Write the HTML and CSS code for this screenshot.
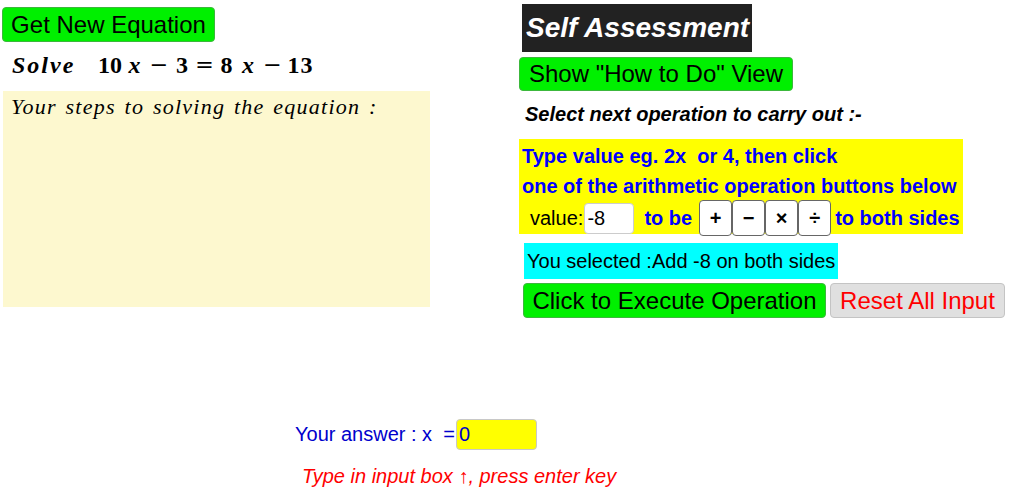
FILE: index.html
```html
<!DOCTYPE html>
<html>
<head>
<meta charset="utf-8">
<link rel="stylesheet" href="styles.css">
</head>
<body>
<div class="applet">
  <div class="top">
    <div class="left">
      <button class="btn green new-eq">Get New Equation</button>
      <div class="solve">
        <span class="solve-word">Solve</span>
        <span class="eq">
          <span class="t w24">10</span><span class="t w25 v">x</span><span class="t w24 op-sym">−</span><span class="t w22">3</span><span class="t w23 op-sym">=</span><span class="t w21">8</span><span class="t w22 v">x</span><span class="t w27 op-sym">−</span><span class="t w29">13</span>
        </span>
      </div>
      <div class="steps"><span class="steps-text">Your steps to solving the equation :</span></div>
    </div>
    <div class="right">
      <div class="title">Self Assessment</div>
      <button class="btn green show-view">Show "How to Do" View</button>
      <div class="select">Select next operation to carry out :-</div>
      <div class="ops">
        <div class="ops-line">Type value eg. 2x&nbsp; or 4, then click</div>
        <div class="ops-line">one of the arithmetic operation buttons below</div>
        <div class="ops-row">
          <span class="value-label">value:</span>
          <span class="value-input">-8</span>
          <span class="to-be">to be</span>
          <span class="op-group">
            <span class="op">+</span><span class="op">−</span><span class="op">×</span><span class="op">÷</span>
          </span>
          <span class="both">to both sides</span>
        </div>
      </div>
      <div class="selected">You selected :Add -8 on both sides</div>
      <div class="actions">
        <button class="btn green execute">Click to Execute Operation</button>
        <button class="btn grey reset">Reset All Input</button>
      </div>
    </div>
  </div>
  <div class="answer">
    <div class="answer-row">
      <span class="answer-label">Your answer : x&nbsp; =</span>
      <span class="answer-input">0</span>
    </div>
    <div class="hint">Type in input box ↑, press enter key</div>
  </div>
</div>
</body>
</html>
```

FILE: styles.css
```css
* { box-sizing: border-box; }
html, body { margin: 0; padding: 0; background: #fff; }
body { width: 1012px; height: 499px; overflow: hidden; font-family: "Liberation Sans", Arial, sans-serif; }

.applet { display: flex; flex-direction: column; }
.top { display: flex; }
.left { width: 519px; display: flex; flex-direction: column; align-items: flex-start; }
.right { display: flex; flex-direction: column; align-items: flex-start; }

.btn {
  font-family: "Liberation Sans", Arial, sans-serif;
  border-radius: 4px;
  padding: 0;
  margin: 0;
  display: flex;
  align-items: center;
  justify-content: center;
  color: #000;
}
.green { background: #00f000; border: 1px solid #3cb83c; }
.grey { background: #e0e0e0; border: 1px solid #c4c4c4; color: #ff0000; }

.new-eq { margin: 7px 0 0 2px; width: 213px; height: 35px; font-size: 24px; }

.solve {
  margin: 10px 0 0 12px;
  height: 28px;
  display: flex;
  align-items: baseline;
  font-family: "Liberation Serif", "Times New Roman", serif;
  font-weight: bold;
  font-size: 24px;
  line-height: 27px;
}
.solve-word { font-style: italic; width: 86px; letter-spacing: 2px; }
.eq { display: flex; align-items: baseline; }
.t { display: inline-block; text-align: center; }
.v { font-style: italic; }
.op-sym { transform: scaleX(1.25); }
.w21 { width: 21px; }
.w22 { width: 22px; }
.w23 { width: 23px; }
.w24 { width: 24px; }
.w25 { width: 25px; }
.w27 { width: 27px; }
.w29 { width: 29px; letter-spacing: 1px; }

.steps {
  margin: 11px 0 0 3px;
  width: 427px;
  height: 216px;
  background: #fdf8cf;
  padding: 3px 0 0 8px;
}
.steps-text {
  font-family: "Liberation Serif", "Times New Roman", serif;
  font-style: italic;
  font-size: 22px;
  letter-spacing: 1.25px;
  word-spacing: 2px;
}

.title {
  margin: 4px 0 0 3px;
  width: 230px;
  height: 48px;
  background: #222;
  color: #fff;
  font-weight: bold;
  font-style: italic;
  font-size: 28px;
  display: flex;
  align-items: center;
  padding-left: 4px;
}
.show-view { margin-top: 5px; width: 274px; height: 34px; font-size: 24px; }

.select {
  margin: 11px 0 0 6px;
  font-weight: bold;
  font-style: italic;
  font-size: 20px;
  line-height: 24px;
}

.ops {
  margin-top: 13px;
  width: 444px;
  height: 95px;
  background: #ffff00;
  color: #0000ff;
  font-weight: bold;
  font-size: 20px;
  padding: 3px 0 0 3px;
}
.ops-line { line-height: 29px; height: 29px; }
.ops-line + .ops-line { margin-top: 1px; }
.ops-row { display: flex; align-items: center; height: 36px; margin-top: -1px; }
.value-label { font-weight: normal; color: #000; font-size: 20px; margin-left: 8px; }
.value-input {
  width: 50px;
  height: 31px;
  background: #fff;
  border: 1px solid #ccc;
  border-radius: 4px;
  color: #000;
  font-weight: normal;
  font-size: 20px;
  display: flex;
  align-items: center;
  padding-left: 2px;
  margin-left: 1px;
}
.to-be { margin-left: 10px; }
.op-group { display: flex; margin-left: 7px; }
.op {
  width: 33px;
  height: 36px;
  background: #fff;
  border: 1px solid #666;
  border-radius: 4px;
  color: #000;
  font-size: 20px;
  display: flex;
  align-items: center;
  justify-content: center;
}
.both { margin-left: 4px; }

.selected {
  margin: 9px 0 0 5px;
  width: 314px;
  height: 36px;
  background: #00ffff;
  font-size: 20px;
  display: flex;
  align-items: center;
  padding-left: 3px;
}

.actions { display: flex; margin: 4px 0 0 4px; gap: 4px; }
.execute { width: 303px; height: 35px; font-size: 24px; }
.reset { width: 175px; height: 35px; font-size: 24px; color: #ff0000; }

.answer { margin-top: 101px; display: flex; flex-direction: column; align-items: flex-start; padding-left: 295px; }
.answer-row { display: flex; align-items: center; color: #0000cc; font-size: 20px; }
.answer-input {
  width: 81px;
  height: 31px;
  background: #ffff00;
  border: 1px solid #c8c8c8;
  border-radius: 4px;
  display: flex;
  align-items: center;
  padding-left: 2px;
  margin-left: 1px;
  font-size: 20px;
}
.hint { margin: 15px 0 0 7px; color: #ff0000; font-style: italic; font-size: 20px; }
```
